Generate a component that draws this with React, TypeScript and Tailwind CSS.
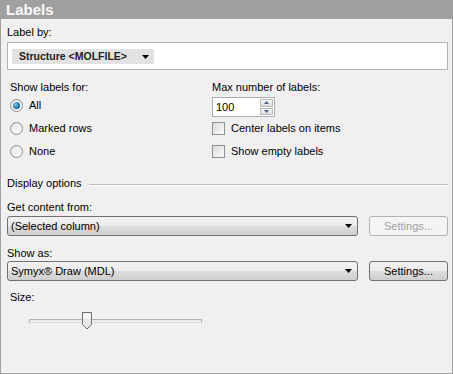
import React from "react";

const font = { fontFamily: '"Liberation Sans", Arial, sans-serif' };

function Arrow() {
  return (
    <svg width="7" height="4" viewBox="0 0 7 4" className="block">
      <path d="M0 0h7L3.5 4z" fill="#000" />
    </svg>
  );
}

function Radio({ checked, label }: { checked?: boolean; label: string }) {
  return (
    <div className="flex h-[23px] items-center">
      <div className="ml-[3px] flex h-[13px] w-[13px] items-center justify-center rounded-full border border-[#8e8f8f] bg-gradient-to-br from-[#e6e6e6] to-[#fbfbfb]">
        {checked && (
          <div className="h-[7px] w-[7px] rounded-full bg-[radial-gradient(circle_at_35%_35%,#7ec8ef,#1a71a8_60%,#0b4f80)]" />
        )}
      </div>
      <span className="ml-[6px]">{label}</span>
    </div>
  );
}

function Check({ label }: { label: string }) {
  return (
    <div className="flex h-[23px] items-center">
      <div className="h-[13px] w-[13px] border border-[#8e8f8f] bg-gradient-to-br from-[#dcdcdc] to-[#fafafa]" />
      <span className="ml-[6px]">{label}</span>
    </div>
  );
}

function Combo({ text }: { text: string }) {
  return (
    <div className="flex h-[20px] w-[351px] items-center justify-between rounded-[3px] border border-[#707070] bg-[linear-gradient(#f2f2f2_0%,#ebebeb_50%,#dddddd_51%,#cfcfcf_100%)] pl-[3px] pr-[5px]">
      <span>{text}</span>
      <Arrow />
    </div>
  );
}

function Button({ disabled }: { disabled?: boolean }) {
  return disabled ? (
    <div className="flex h-[20px] w-[79px] items-center justify-center rounded-[3px] border border-[#adb2b5] bg-[#f4f4f4] text-[#a0a0a0]">
      Settings...
    </div>
  ) : (
    <div className="flex h-[20px] w-[79px] items-center justify-center rounded-[3px] border border-[#707070] bg-[linear-gradient(#f2f2f2_0%,#ebebeb_50%,#dddddd_51%,#cfcfcf_100%)] text-black">
      Settings...
    </div>
  );
}

export default function App() {
  return (
    <div
      style={font}
      className="h-[374px] w-[453px] border border-[#a0a0a0] bg-[#f0f0f0] text-[11px] leading-[13px] text-black"
    >
      <div className="h-[18px] bg-[#a0a0a0] pl-[5px] text-[15px] font-bold leading-[18px] text-[#f8f8f8]">
        Labels
      </div>
      <div className="pl-[6px] pr-[4px]">
        <div className="mt-[7px] h-[13px]">Label by:</div>
        <div className="mt-[3px] h-[28px] border border-[#b4b4b4] bg-white pl-[4px] pt-[6px]">
          <div className="flex h-[15px] w-[142px] items-center bg-[#e2e2e2] pl-[7px]">
            <span className="font-bold text-[#222] text-[10.5px]">Structure &lt;MOLFILE&gt;</span>
            <div className="ml-auto mr-[5px]">
              <Arrow />
            </div>
          </div>
        </div>

        <div className="mt-[11px] flex">
          <div className="w-[205px]">
            <div className="h-[13px] pl-[3px]">Show labels for:</div>
            <Radio checked label="All" />
            <Radio label="Marked rows" />
            <Radio label="None" />
          </div>
          <div>
            <div className="h-[13px]">Max number of labels:</div>
            <div className="mt-[3px] flex h-[20px] w-[63px] items-center border border-[#abadb3] bg-white pl-[3px]">
              <span>100</span>
              <div className="ml-auto mr-[1px] flex h-[16px] w-[13px] flex-col gap-[1px]">
                <div className="flex h-[8px] items-center justify-center border border-[#b7b9bd] bg-gradient-to-b from-[#f6f6f6] to-[#dadde0]">
                  <svg width="5" height="3" viewBox="0 0 5 3"><path d="M0 3h5L2.5 0z" fill="#4a6583" /></svg>
                </div>
                <div className="flex h-[8px] items-center justify-center border border-[#b7b9bd] bg-gradient-to-b from-[#f6f6f6] to-[#dadde0]">
                  <svg width="5" height="3" viewBox="0 0 5 3"><path d="M0 0h5L2.5 3z" fill="#4a6583" /></svg>
                </div>
              </div>
            </div>
            <Check label="Center labels on items" />
            <Check label="Show empty labels" />
          </div>
        </div>

        <div className="mt-[14px] flex h-[13px] items-center">
          <span>Display options</span>
          <div className="ml-[7px] mt-[2px] flex-1 border-t border-b border-t-[#bcbcbc] border-b-white" />
        </div>

        <div className="mt-[11px] h-[13px]">Get content from:</div>
        <div className="mt-[2px] flex gap-[11px]">
          <Combo text="(Selected column)" />
          <Button disabled />
        </div>

        <div className="mt-[11px] h-[13px]">Show as:</div>
        <div className="mt-[1px] flex gap-[11px]">
          <Combo text="Symyx® Draw (MDL)" />
          <Button />
        </div>

        <div className="mt-[10px] h-[13px] pl-[3px]">Size:</div>
        <div className="mt-[7px] pl-[22px]">
          <svg width="175" height="20" viewBox="0 0 175 20" className="block">
            <rect x="0.5" y="8.5" width="172" height="3" fill="#e7eaea" stroke="#b6b6b6" />
            <line x1="1" y1="11" x2="172" y2="11" stroke="#ffffff" />
            <path
              d="M53.5 1.5h9v12l-4.5 4.5l-4.5-4.5z"
              fill="#e9e9e9"
              stroke="#707070"
            />
            <path d="M54.5 2.5h7v5h-7z" fill="#f7f7f7" />
          </svg>
        </div>
      </div>
    </div>
  );
}
